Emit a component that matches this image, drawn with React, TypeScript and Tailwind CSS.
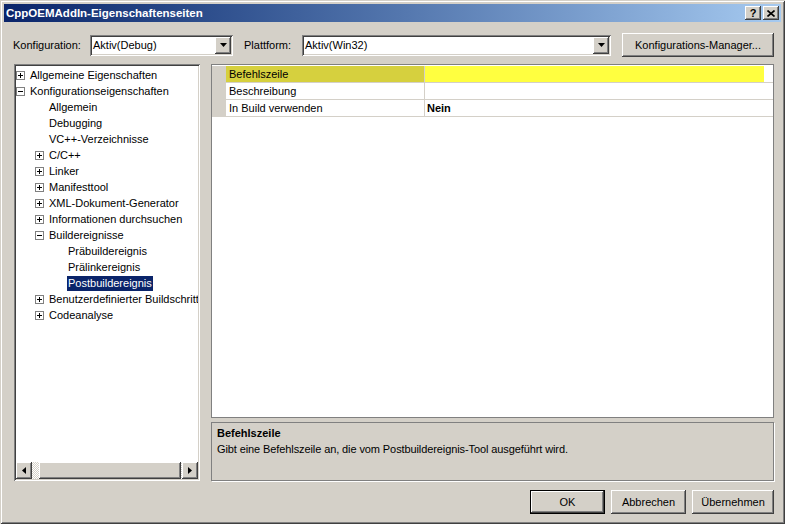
import React from "react";

const raised =
  "shadow-[inset_-1px_-1px_#404040,inset_1px_1px_#ffffff,inset_-2px_-2px_#808080,inset_2px_2px_#d4d0c8]";
const sunken =
  "shadow-[inset_1px_1px_#808080,inset_-1px_-1px_#ffffff,inset_2px_2px_#404040,inset_-2px_-2px_#d4d0c8]";

type Node = { l: number; t: string; e?: "+" | "-"; sel?: boolean };

const tree: Node[] = [
  { l: 0, t: "Allgemeine Eigenschaften", e: "+" },
  { l: 0, t: "Konfigurationseigenschaften", e: "-" },
  { l: 1, t: "Allgemein" },
  { l: 1, t: "Debugging" },
  { l: 1, t: "VC++-Verzeichnisse" },
  { l: 1, t: "C/C++", e: "+" },
  { l: 1, t: "Linker", e: "+" },
  { l: 1, t: "Manifesttool", e: "+" },
  { l: 1, t: "XML-Dokument-Generator", e: "+" },
  { l: 1, t: "Informationen durchsuchen", e: "+" },
  { l: 1, t: "Buildereignisse", e: "-" },
  { l: 2, t: "Präbuildereignis" },
  { l: 2, t: "Prälinkereignis" },
  { l: 2, t: "Postbuildereignis", sel: true },
  { l: 1, t: "Benutzerdefinierter Buildschritt", e: "+" },
  { l: 1, t: "Codeanalyse", e: "+" },
];

const props = [
  { name: "Befehlszeile", value: "", sel: true },
  { name: "Beschreibung", value: "" },
  { name: "In Build verwenden", value: "Nein", bold: true },
];

function Expander({ kind }: { kind: "+" | "-" }) {
  return (
    <svg width="9" height="9" viewBox="0 0 9 9" className="block">
      <rect x="0.5" y="0.5" width="8" height="8" fill="#fff" stroke="#808080" />
      <path d="M2 4.5h5" stroke="#000" />
      {kind === "+" && <path d="M4.5 2v5" stroke="#000" />}
    </svg>
  );
}

function ComboArrow() {
  return (
    <div className={`w-[16px] h-[17px] bg-[#d4d0c8] ${raised} flex items-center justify-center`}>
      <svg width="7" height="4" viewBox="0 0 7 4">
        <path d="M0 0h7L3.5 4z" fill="#000" />
      </svg>
    </div>
  );
}

function Combo({ width, text }: { width: string; text: string }) {
  return (
    <div className={`${width} h-[21px] bg-white ${sunken} flex items-center p-[2px]`}>
      <span className="flex-1 pl-[1px] leading-[17px]">{text}</span>
      <ComboArrow />
    </div>
  );
}

function Button({ w, children, def }: { w: string; children: React.ReactNode; def?: boolean }) {
  return (
    <div className={`${w} h-[24px] ${def ? "border border-black" : ""}`}>
      <div className={`w-full h-full bg-[#d4d0c8] ${raised} flex items-center justify-center`}>
        {children}
      </div>
    </div>
  );
}

function ScrollArrow({ dir }: { dir: "l" | "r" }) {
  return (
    <div className={`w-[16px] h-[17px] bg-[#d4d0c8] ${raised} flex items-center justify-center`}>
      <svg width="4" height="7" viewBox="0 0 4 7">
        <path d={dir === "l" ? "M4 0v7L0 3.5z" : "M0 0v7l4-3.5z"} fill="#000" />
      </svg>
    </div>
  );
}

export default function App() {
  return (
    <div
      className={`w-[785px] h-[524px] bg-[#d4d0c8] p-[4px] flex flex-col text-[11px] text-black font-['Liberation_Sans',Arial,sans-serif] shadow-[inset_1px_1px_#d4d0c8,inset_-1px_-1px_#404040,inset_2px_2px_#ffffff,inset_-2px_-2px_#808080] overflow-hidden`}
    >
      {/* title bar */}
      <div className="h-[18px] bg-gradient-to-r from-[#0a246a] to-[#a6caf0] flex items-center pl-[2px] pr-[2px]">
        <span className="flex-1 text-white font-bold text-[11.5px] leading-[18px]">
          CppOEMAddIn-Eigenschaftenseiten
        </span>
        <div className={`w-[16px] h-[14px] bg-[#d4d0c8] ${raised} flex items-center justify-center font-bold text-[11px] leading-none`}>
          ?
        </div>
        <div className={`ml-[2px] w-[16px] h-[14px] bg-[#d4d0c8] ${raised} flex items-center justify-center`}>
          <svg width="8" height="7" viewBox="0 0 8 7">
            <path d="M0.5 0.5l7 6M7.5 0.5l-7 6" stroke="#000" strokeWidth="1.6" />
          </svg>
        </div>
      </div>

      {/* body */}
      <div className="flex-1 flex flex-col pl-[10px] pr-[7px]">
        {/* config row */}
        <div className="mt-[11px] h-[24px] flex items-center">
          <span className="-ml-[1px] w-[77px]">Konfiguration:</span>
          <Combo width="w-[143px]" text="Aktiv(Debug)" />
          <span className="ml-[11px] w-[58px]">Plattform:</span>
          <Combo width="w-[309px]" text="Aktiv(Win32)" />
          <div className="ml-[11px]">
            <Button w="w-[152px]">Konfigurations-Manager...</Button>
          </div>
        </div>

        {/* main area */}
        <div className="mt-[7px] h-[417px] flex">
          {/* tree */}
          <div className={`w-[186px] h-full bg-white ${sunken} p-[2px] flex flex-col`}>
            <div className="flex-1 overflow-hidden pt-[1px]">
              {tree.map((n) => (
                <div
                  key={n.t}
                  className="h-[16px] flex items-center whitespace-nowrap"
                  style={{ paddingLeft: n.l * 19 }}
                >
                  <div className="w-[9px] shrink-0">{n.e && <Expander kind={n.e} />}</div>
                  <span
                    className={`ml-[4px] px-[1px] leading-[15px] ${
                      n.sel ? "bg-[#0a246a] text-white" : ""
                    }`}
                  >
                    {n.t}
                  </span>
                </div>
              ))}
            </div>
            {/* horizontal scrollbar */}
            <div className="h-[17px] flex">
              <ScrollArrow dir="l" />
              <div className="w-[7px] bg-[repeating-conic-gradient(#d4d0c8_0_25%,#ffffff_0_50%)] bg-[length:2px_2px]" />
              <div className={`flex-1 bg-[#d4d0c8] ${raised}`} />
              <div className="w-[1px] bg-[repeating-conic-gradient(#d4d0c8_0_25%,#ffffff_0_50%)] bg-[length:2px_2px]" />
              <ScrollArrow dir="r" />
            </div>
          </div>

          {/* right column */}
          <div className="ml-[11px] flex-1 flex flex-col">
            <div className="h-[354px] bg-white border border-[#808080] pt-[1px]">
              {props.map((p) => (
                <div key={p.name} className="h-[17px] flex border-b border-[#d4d0c8]">
                  <div className="w-[14px] bg-[#d4d0c8]" />
                  <div
                    className={`w-[199px] pl-[3px] leading-[16px] border-r border-[#d4d0c8] ${
                      p.sel ? "bg-[#d6d03e]" : ""
                    }`}
                  >
                    {p.name}
                  </div>
                  <div className="flex-1 flex">
                    <div
                      className={`flex-1 pl-[2px] leading-[16px] ${p.sel ? "bg-[#ffff40] mr-[9px]" : ""} ${
                        p.bold ? "font-bold" : ""
                      }`}
                    >
                      {p.value}
                    </div>
                  </div>
                </div>
              ))}
            </div>
            <div className="mt-[4px] flex-1 border border-[#808080] shadow-[1px_1px_#ffffff] px-[5px] pt-[2px]">
              <div className="font-bold leading-[16px]">Befehlszeile</div>
              <div className="leading-[16px] tracking-[-0.1px]">
                Gibt eine Befehlszeile an, die vom Postbuildereignis-Tool ausgeführt wird.
              </div>
            </div>
          </div>
        </div>

        {/* buttons */}
        <div className="mt-[9px] flex justify-end gap-[6px]">
          <Button w="w-[75px]" def>
            OK
          </Button>
          <Button w="w-[75px]">Abbrechen</Button>
          <Button w="w-[82px]">Übernehmen</Button>
        </div>
      </div>
    </div>
  );
}
